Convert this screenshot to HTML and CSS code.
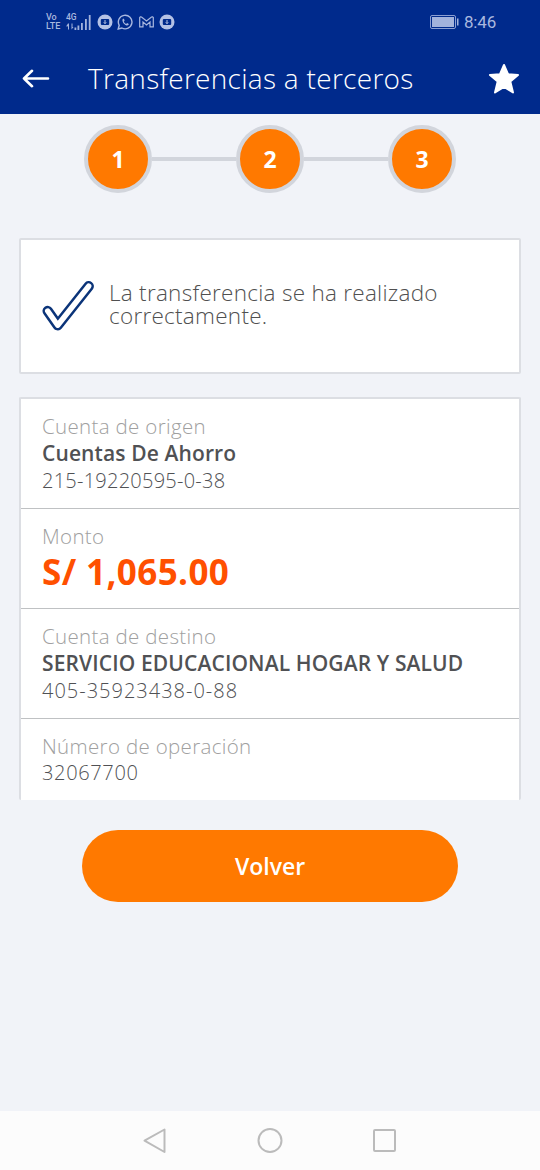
FILE: index.html
```html
<!DOCTYPE html>
<html lang="es">
<head>
<meta charset="utf-8">
<title>Transferencias a terceros</title>
<link rel="stylesheet" href="styles.css">
</head>
<body>
<div class="app">
  <div class="status">
    <div class="volte"><span>Vo</span><span>LTE</span></div>
    <div class="signal">
      <span class="net">4G</span>
      <svg width="26" height="18" viewBox="0 0 26 18" fill="#a3b3dc">
        <path d="M0 13.500L2 10.500V16.500H3V10.500H2V13zM4.500 10.500h1v6l2-2.500H6.500v-3.500z"/>
        <path d="M8.500 14.500h1.800V17H8.500zM11.500 12.500h1.800V17h-1.800zM15 10h1.800v7H15zM19 6h1.800v11H19zM22.800 2h1.800v15h-1.800z"/>
      </svg>
    </div>
    <svg class="notif" width="16" height="16" viewBox="0 0 16 16"><circle cx="8" cy="8" r="7.500" fill="#b4c1e5"/><rect x="3.800" y="5" width="8.400" height="6" rx="1" fill="#002a8c"/><path d="M8 6v3.500M6.800 8.300L8 9.700l1.200-1.400" stroke="#b4c1e5" fill="none"/></svg>
    <svg class="notif wa" width="17" height="16" viewBox="0 0 17 16" fill="none" stroke="#a9b8df" stroke-width="1.400"><path d="M1.200 15l1-3.700a6.800 6.800 0 1 1 2.700 2.700z"/><path d="M6 4.700c-1.800 1.500.8 6 3.500 6.800 1.200.3 2.300-.4 2.300-1.400l-1.700-1-1 .9C8 9.500 7.200 8.600 6.800 7.600l.8-.9L7 4.700z" fill="#a9b8df" stroke="none"/></svg>
    <svg class="notif gm" width="15" height="12" viewBox="0 0 15 12" fill="none" stroke="#a9b8df" stroke-width="1.200"><path d="M.7 10.800V1.600Q1.200.4 2.500 1l5 4 5-4q1.300-.6 1.800.6v9.200h-3.300V6L7.500 8.900 4 6v4.800z"/></svg>
    <svg class="notif" width="16" height="16" viewBox="0 0 16 16"><circle cx="8" cy="8" r="7.500" fill="#b4c1e5"/><rect x="3.800" y="5" width="8.400" height="6" rx="1" fill="#002a8c"/><path d="M8 6v3.500M6.800 8.300L8 9.700l1.200-1.400" stroke="#b4c1e5" fill="none"/></svg>
    <div class="right">
      <svg width="29" height="14" viewBox="0 0 29 14"><rect x=".5" y=".5" width="25" height="13" rx="1.500" fill="none" stroke="#8c9fd2"/><rect x="2" y="2" width="22" height="10" fill="#a3b3dc"/><rect x="27" y="3.500" width="1.500" height="7" fill="#a3b3dc"/></svg>
      <span class="clock">8:46</span>
    </div>
  </div>
  <header class="header">
    <svg class="back" width="28" height="20" viewBox="0 0 28 20" fill="none" stroke="#fff" stroke-width="2.600" stroke-linecap="round" stroke-linejoin="round"><path d="M26 9.500H2M10 1.800L2 9.500l8 7.700"/></svg>
    <h1 class="title">Transferencias a terceros</h1>
    <svg class="star" width="32" height="32" viewBox="0 0 32 32"><path d="M16 2l4 9.200 10 .8-7.700 6.500 2.700 11-9-5.700-9 5.700 2.700-11L2 12l10-.8z" fill="#fff" stroke="#fff" stroke-width="2" stroke-linejoin="round"/></svg>
  </header>
  <div class="steps">
    <div class="step">1</div><div class="line"></div><div class="step">2</div><div class="line"></div><div class="step">3</div>
  </div>
  <section class="card result">
    <svg width="54" height="52" viewBox="0 0 54 52" fill="none" stroke-linecap="round" stroke-linejoin="round"><path d="M5.700 31L15.700 45.200 46.700 6.200" stroke="#0b3479" stroke-width="10.400"/><path d="M5.700 31L15.700 45.200 46.700 6.200" stroke="#fff" stroke-width="5.400"/></svg>
    <p class="message">La transferencia se ha realizado<br>correctamente.</p>
  </section>
  <section class="card details">
    <div class="row"><p class="label">Cuenta de origen</p><p class="name">Cuentas De Ahorro</p><p class="number">215-19220595-0-38</p></div>
    <div class="row short"><p class="label">Monto</p><p class="amount">S/ 1,065.00</p></div>
    <div class="row"><p class="label">Cuenta de destino</p><p class="name">SERVICIO EDUCACIONAL HOGAR Y SALUD</p><p class="number target">405-35923438-0-88</p></div>
    <div class="row last"><p class="label">Número de operación</p><p class="number operation">32067700</p></div>
  </section>
  <button class="volver">Volver</button>
  <nav class="nav">
    <svg width="24" height="28" viewBox="0 0 24 28"><path d="M22.500 2.500v22.500L2.500 13.700z"/></svg>
    <svg width="28" height="28" viewBox="0 0 28 28"><circle cx="15" cy="13.500" r="11.500"/></svg>
    <svg width="26" height="28" viewBox="0 0 26 28"><rect x="2" y="3" width="21" height="21" rx="1"/></svg>
  </nav>
</div>
</body>
</html>
```

FILE: styles.css
```css
* { box-sizing: border-box; margin: 0; padding: 0; }
body { background: #f1f3f8; font-family: "Open Sans", "Noto Sans", sans-serif; font-weight: 300; }
.app { width: 540px; height: 1170px; display: flex; flex-direction: column; overflow: hidden; }
svg { display: block; flex: none; }
p, h1, span { white-space: nowrap; }
.status { height: 43px; flex: none; background: #002a8c; color: #a9b8df; display: flex; align-items: center; padding-left: 46px; font-family: Roboto, sans-serif; }
.volte { width: 20px; font-size: 9px; line-height: 9px; font-weight: 500; display: flex; flex-direction: column; }
.signal { position: relative; width: 26px; margin-right: 5px; }
.net { position: absolute; left: 0; top: 0; font-size: 8.500px; line-height: 9px; font-weight: 500; }
.notif { margin-right: 4px; }
.wa { margin-right: 5px; }
.gm { margin-right: 5px; }
.right { margin-left: auto; margin-right: 44px; display: flex; align-items: center; gap: 5px; }
.clock { font-size: 17px; font-weight: 400; line-height: 20px; letter-spacing: -.2px; }
.header { height: 71px; flex: none; background: #002a8c; color: #fff; display: flex; align-items: center; padding: 0 20px 0 22px; }
.title { margin: 0 0 2px 38px; font-size: 28px; line-height: 40px; font-weight: 300; letter-spacing: .3px; }
.star { margin-left: auto; }
.steps { height: 68px; margin-top: 11px; padding: 0 84px; flex: none; display: flex; align-items: center; }
.step { width: 68px; height: 68px; border: 4px solid #d2d5dc; border-radius: 50%; background: #ff7900; color: #fff; font-size: 23px; font-weight: 700; display: flex; align-items: center; justify-content: center; flex: none; }
.line { flex: 1; height: 4px; background: #d2d5dc; }
.card { margin: 0 19px; background: #fff; border: 2px solid #dcdee3; border-radius: 2px; flex: none; }
.result { height: 136px; margin-top: 45px; padding-left: 21px; display: flex; align-items: center; }
.message { margin: 0 0 3px 13px; font-size: 22.500px; line-height: 22.500px; letter-spacing: .27px; color: #505050; }
.details { height: 403px; margin-top: 23px; border-bottom: 0; }
.row { height: 110px; padding: 14px 21px 0; border-bottom: 1px solid #bfc1c3; }
.row.short { height: 100px; }
.row.last { border: 0; height: 81px; }
.label { font-size: 20.500px; line-height: 27px; letter-spacing: .33px; color: #a0a0a0; }
.name { font-size: 21px; line-height: 27px; font-weight: 600; letter-spacing: .12px; color: #505154; }
.number { font-size: 20px; line-height: 27px; letter-spacing: .25px; color: #505154; }
.target { letter-spacing: 1px; }
.operation { letter-spacing: .65px; line-height: 26px; }
.amount { font-size: 35px; line-height: 44px; font-weight: 700; letter-spacing: .4px; color: #ff5000; }
.volver { width: 376px; height: 72px; margin: 30px auto 0 82px; flex: none; border: 0; border-radius: 36px; background: #ff7900; color: #fff; font: 600 23px "Open Sans", sans-serif; }
.nav { height: 59px; margin-top: auto; flex: none; background: #fcfcfc; display: flex; align-items: center; justify-content: space-between; padding: 0 142px; }
.nav svg { fill: none; stroke: #bbb; stroke-width: 2; stroke-linejoin: round; }
```
